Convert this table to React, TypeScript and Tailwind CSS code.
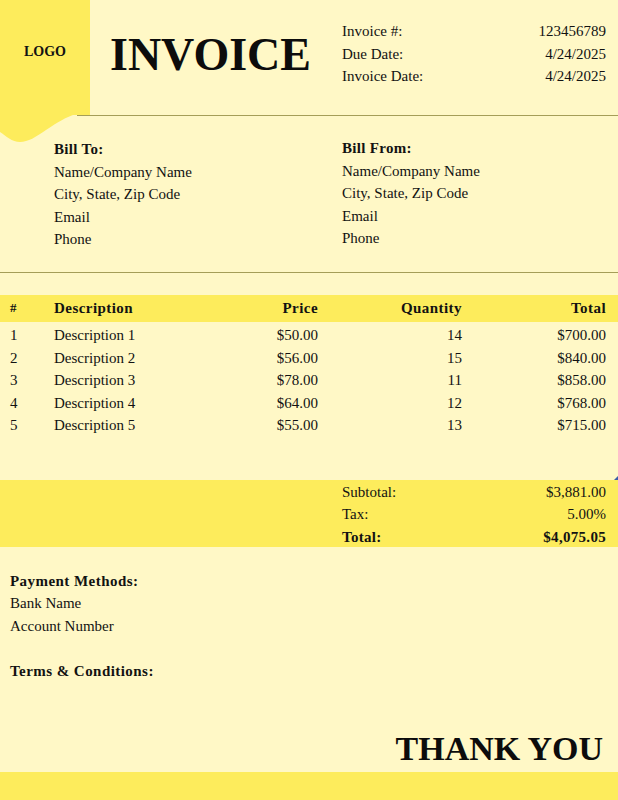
import React from "react";

const serif = { fontFamily: '"Liberation Serif", "Times New Roman", serif' };

const items = [
  ["1", "Description 1", "$50.00", "14", "$700.00"],
  ["2", "Description 2", "$56.00", "15", "$840.00"],
  ["3", "Description 3", "$78.00", "11", "$858.00"],
  ["4", "Description 4", "$64.00", "12", "$768.00"],
  ["5", "Description 5", "$55.00", "13", "$715.00"],
];

export default function App() {
  return (
    <div
      className="relative w-[618px] h-[800px] overflow-hidden bg-[#fff8c6] text-[#121212] text-[15px] leading-[22.5px]"
      style={serif}
    >
      {/* wave tail of logo panel */}
      <svg
        className="absolute left-0 top-[100px]"
        width="92"
        height="46"
        viewBox="0 0 92 46"
      >
        <path
          d="M0 0 H90 V5 C86 10 82 13 76 14 C66 17 58 22 46 30 C36 37 28 42 20 42 C12 42 6 36 0 32 Z"
          fill="#fdec5c"
        />
      </svg>

      {/* header */}
      <div className="flex h-[115px]">
        <div className="w-[90px] h-full bg-[#fdec5c] flex justify-center pt-[42px]">
          <span className="text-[14px] leading-[20px] font-bold">LOGO</span>
        </div>
        <div className="w-[252px] pl-[20px] pt-[31px]">
          <div className="text-[46px] leading-[47px] font-bold text-[#0c0c0c]">INVOICE</div>
        </div>
        <div className="flex-1 pr-[12px] pt-[20px]">
          <div className="flex justify-between">
            <span>Invoice #:</span>
            <span>123456789</span>
          </div>
          <div className="flex justify-between">
            <span>Due Date:</span>
            <span>4/24/2025</span>
          </div>
          <div className="flex justify-between">
            <span>Invoice Date:</span>
            <span>4/24/2025</span>
          </div>
        </div>
      </div>
      <div className="ml-[77px] h-px bg-[#a59e58]" />

      {/* bill to / from */}
      <div className="flex h-[156px] pt-[22px]">
        <div className="w-[342px] pl-[54px]">
          <div className="font-bold tracking-[0.02em]">Bill To:</div>
          <div>Name/Company Name</div>
          <div>City, State, Zip Code</div>
          <div>Email</div>
          <div>Phone</div>
        </div>
        <div className="flex-1 -mt-[1px]">
          <div className="font-bold tracking-[0.02em]">Bill From:</div>
          <div>Name/Company Name</div>
          <div>City, State, Zip Code</div>
          <div>Email</div>
          <div>Phone</div>
        </div>
      </div>
      <div className="h-px bg-[#a59e58]" />

      {/* table */}
      <div className="mt-[22px]">
        <div className="h-[27px] bg-[#fdec5c] grid grid-cols-[44px_120px_144px_144px_144px] pl-[10px] items-center font-bold tracking-[0.03em]">
          <span className="text-[13px]">#</span>
          <span>Description</span>
          <span className="text-right">Price</span>
          <span className="text-right">Quantity</span>
          <span className="text-right">Total</span>
        </div>
        <div className="pt-[2px]">
          {items.map((r) => (
            <div
              key={r[0]}
              className="grid grid-cols-[44px_120px_144px_144px_144px] pl-[10px]"
            >
              <span>{r[0]}</span>
              <span>{r[1]}</span>
              <span className="text-right">{r[2]}</span>
              <span className="text-right">{r[3]}</span>
              <span className="text-right">{r[4]}</span>
            </div>
          ))}
        </div>
      </div>

      {/* totals */}
      <div className="relative mt-[43px] h-[67px] bg-[#fdec5c] pt-[1px] pl-[342px] pr-[12px]">
        <div className="absolute right-0 -top-[4px] w-0 h-0 border-l-[4px] border-l-transparent border-b-[4px] border-b-[#3b5ea8]" />
        <div className="flex justify-between">
          <span>Subtotal:</span>
          <span>$3,881.00</span>
        </div>
        <div className="flex justify-between">
          <span>Tax:</span>
          <span>5.00%</span>
        </div>
        <div className="flex justify-between font-bold tracking-[0.02em]">
          <span>Total:</span>
          <span>$4,075.05</span>
        </div>
      </div>

      {/* payment */}
      <div className="pt-[23px] pl-[10px]">
        <div className="font-bold tracking-[0.03em]">Payment Methods:</div>
        <div>Bank Name</div>
        <div>Account Number</div>
        <div className="h-[22.5px]" />
        <div className="font-bold tracking-[0.03em]">Terms &amp; Conditions:</div>
      </div>

      <div className="mt-[50px] pr-[15px] flex justify-end">
        <span className="text-[34px] leading-[34px] font-bold text-[#0c0c0c]">THANK YOU</span>
      </div>

      <div className="absolute left-0 right-0 bottom-0 h-[28px] bg-[#fdec5c]" />
    </div>
  );
}
